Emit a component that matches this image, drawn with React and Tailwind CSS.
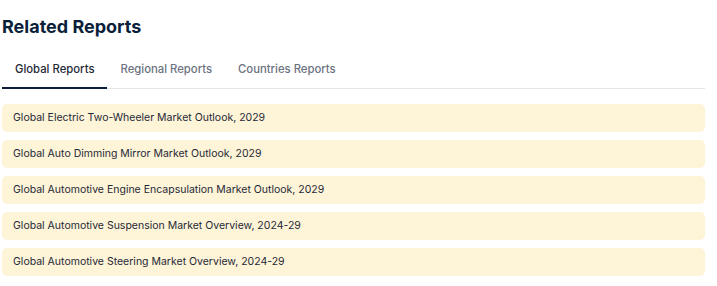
import React, { useState } from 'react';

const tabs = ['Global Reports', 'Regional Reports', 'Countries Reports'];

const reports = [
  'Global Electric Two-Wheeler Market Outlook, 2029',
  'Global Auto Dimming Mirror Market Outlook, 2029',
  'Global Automotive Engine Encapsulation Market Outlook, 2029',
  'Global Automotive Suspension Market Overview, 2024-29',
  'Global Automotive Steering Market Overview, 2024-29',
];

export default function App() {
  const [active, setActive] = useState(0);

  return (
    <div className="w-[717px] h-[286px] bg-white pl-[2px] pr-[12px] pt-[15px] font-['Inter',sans-serif]">
      <h2 className="text-[18px] leading-[24px] font-bold text-[#0b1f3a]">Related Reports</h2>

      <div className="mt-[21px] flex border-b border-[#e3e5e8]">
        {tabs.map((t, i) => (
          <button
            key={t}
            onClick={() => setActive(i)}
            className={
              i === active
                ? 'px-[13px] pb-[9px] pt-[1px] text-[11.3px] font-medium text-[#1f2937] border-b-2 border-[#0b1f3a] -mb-px'
                : 'px-[13px] pb-[9px] pt-[1px] text-[11.3px] font-medium text-[#6b7280] border-b-2 border-transparent -mb-px'
            }
          >
            {t}
          </button>
        ))}
      </div>

      <ul className="mt-[15px] flex flex-col gap-[8px]">
        {reports.map(r => (
          <li
            key={r}
            className="h-[28px] flex items-center px-[11px] bg-[#fef4d7] rounded-[5px] text-[10.5px] text-[#1f2937] cursor-pointer"
          >
            {r}
          </li>
        ))}
      </ul>
    </div>
  );
}
